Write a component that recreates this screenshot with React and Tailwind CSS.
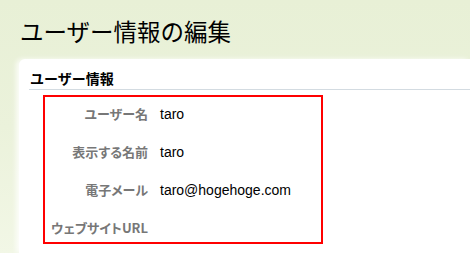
import React from 'react';

const fields = [
  { label: 'ユーザー名', value: 'taro' },
  { label: '表示する名前', value: 'taro' },
  { label: '電子メール', value: 'taro@hogehoge.com' },
  { label: 'ウェブサイトURL', value: '' },
];

const App = () => {
  return (
    <div
      className="w-[470px] h-[253px] overflow-hidden flex flex-col bg-gradient-to-b from-[#e8f0d6] via-[#ebf2db] to-[#f2f7e6] pl-[19px]"
      style={{ fontFamily: '"Noto Sans CJK JP", "Liberation Sans", sans-serif' }}
    >
      {/* Page title */}
      <h1 className="pt-[16px] pl-px h-[59px] shrink-0 text-[23.5px] leading-[30px] text-black">
        ユーザー情報の編集
      </h1>

      {/* Card */}
      <div className="flex-1 bg-white rounded-tl-[6px] shadow-[-3px_0_5px_rgba(255,255,255,0.8)]">
        <div className="ml-[10px] pl-px pt-[10px] h-[31px] border-b border-[#d3dbe1]">
          <h2 className="text-[14px] leading-[18px] font-bold text-black">ユーザー情報</h2>
        </div>

        <div className="ml-[24px] mt-[5px] w-[280px] h-[149px] border-2 border-[#ff0000] pt-[7px]">
          <div className="flex flex-col gap-[18px]">
            {fields.map((f) => (
              <div key={f.label} className="flex items-center h-[20px]">
                <span className="w-[103px] flex justify-end whitespace-nowrap text-[13px] font-bold text-[#777777] [font-feature-settings:'palt']">
                  {f.label}
                </span>
                <span
                  className="ml-[12px] text-[14px] text-black"
                  style={{ fontFamily: '"Liberation Sans", Arial, sans-serif' }}
                >
                  {f.value}
                </span>
              </div>
            ))}
          </div>
        </div>
      </div>
    </div>
  );
};

export default App;
